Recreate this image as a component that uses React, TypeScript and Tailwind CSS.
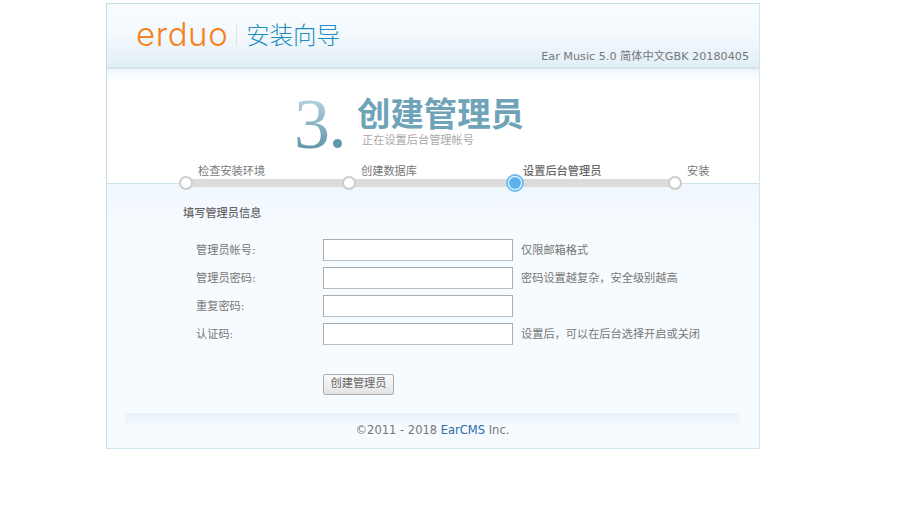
const cjk = "font-['DejaVu_Sans','Noto_Sans_CJK_SC',sans-serif]";

function Row({ label, hint }: { label: string; hint?: string }) {
  return (
    <div className="flex h-[28px] items-start">
      <label className="w-[127px] pt-[3px] text-[11.2px] leading-[18px] text-[#777]">{label}</label>
      <input className="h-[22px] w-[190px] border border-[#ababab] border-b-[#bbb] bg-white outline-none" />
      {hint && <span className="ml-[8px] pt-[3px] text-[11.2px] leading-[18px] text-[#777]">{hint}</span>}
    </div>
  );
}

function Step({ label, w, active, bold }: { label: string; w: string; active?: boolean; bold?: boolean }) {
  return (
    <div className={`${w} relative h-[34px]`}>
      <span className={`absolute top-[2px] whitespace-nowrap text-[11.2px] leading-[16px] ${bold ? "left-[9px] font-medium text-[#666]" : "left-[12px] text-[#777]"}`}>
        {label}
      </span>
      {active ? (
        <span className="absolute left-[-8px] top-[12px] flex h-[18px] w-[18px] items-center justify-center rounded-full border-2 border-[#6cbcee] bg-white">
          <span className="h-[12px] w-[12px] rounded-full bg-[#5cb2ec]" />
        </span>
      ) : (
        <span className="absolute left-[-7px] top-[14px] h-[14px] w-[14px] rounded-full border-2 border-[#cccccc] bg-white" />
      )}
    </div>
  );
}

export default function App() {
  return (
    <div className={`h-[523px] w-[900px] bg-white pl-[106px] pt-[3px] ${cjk}`}>
      <div className="relative flex h-[446px] w-[654px] flex-col border border-[#c6dde8] border-r-[#d3e5ed] border-b-[#d3e5ed] bg-[#f7fbff]">
        <header className="flex h-[65px] shrink-0 items-start justify-between border-b-2 border-[#d5e3ec] bg-gradient-to-b from-[#f8fcff] via-[#f3f9fd] to-[#e2eff7]">
          <div className="flex items-center pl-[29px] pt-[16px]">
            <span className="-mt-px font-['Inter',sans-serif] text-[33px] font-light leading-[30px] tracking-[0.6px] text-[#f58220]">erduo</span>
            <span className="ml-[8px] h-[22px] w-px bg-[#dfe5e5]" />
            <span className="-mt-px ml-[9px] font-['Noto_Sans_CJK_SC',sans-serif] text-[23.4px] font-light leading-[30px] text-[#1c8dbb]">安装向导</span>
          </div>
          <span className="mr-[10px] mt-[45px] text-[11.2px] leading-[16px] text-[#777]">Ear Music 5.0 简体中文GBK 20180405</span>
        </header>

        <section className="relative h-[114px] shrink-0 bg-gradient-to-b from-[#eef6fb] to-white to-[12px] pt-[20px]">
          <div className="flex pl-[186px]">
            <span className="bg-gradient-to-b from-[#c5dfe9] to-[#5089a1] bg-clip-text pl-[1px] font-['Liberation_Serif',serif] text-[72px] leading-[70px] text-transparent">3</span>
            <span className="mt-[50px] ml-[3px] h-[9px] w-[9px] self-start rounded-full bg-[#5f97ad]" />
            <div className="ml-[15px] flex flex-col">
              <h1 className="mt-[6px] font-['Noto_Sans_CJK_SC',sans-serif] text-[33.4px] font-bold leading-[34px] text-[#6ea3b8]">创建管理员</h1>
              <p className="ml-[5px] mt-[4px] text-[11.2px] leading-[16px] text-[#aaaaaa]">正在设置后台管理帐号</p>
            </div>
          </div>
        </section>

        <main className="relative flex-1 border-t border-[#cfe3ec] bg-gradient-to-b from-[#f1f8fd] to-[#f6fbff] to-[60px]">
          <div className="absolute left-[79px] top-[-22px] flex">
            <div className="absolute left-[0px] top-[17px] h-[8px] w-[489px] bg-[#dcdcdc]" />
            <Step label="检查安装环境" w="w-[163px]" />
            <Step label="创建数据库" w="w-[165px]" />
            <Step label="设置后台管理员" w="w-[161px]" active bold />
            <Step label="安装" w="w-[40px]" />
          </div>

          <h2 className="pl-[76px] pt-[22px] text-[11.2px] font-medium leading-[16px] text-[#666]">填写管理员信息</h2>

          <form className="pl-[89px] pt-[17px]">
            <Row label="管理员帐号:" hint="仅限邮箱格式" />
            <Row label="管理员密码:" hint="密码设置越复杂，安全级别越高" />
            <Row label="重复密码:" />
            <Row label="认证码:" hint="设置后，可以在后台选择开启或关闭" />
            <div className="pl-[127px] pt-[19px]">
              <button type="button" className="h-[21px] w-[71px] rounded-[2px] border border-[#aaaaaa] bg-gradient-to-b from-[#fafafa] to-[#e4e4e4] text-[11.2px] leading-[18px] text-[#666]">
                创建管理员
              </button>
            </div>
          </form>

          <footer className="ml-[18px] mr-[19px] mt-[18px] h-[11px] bg-gradient-to-b from-[#e8f2fa] to-[#f2f8fd]" />
          <p className="-mt-px pr-px text-center text-[11.5px] leading-[14px] text-[#777]">
            ©2011 - 2018 <span className="text-[#2a6ca6]">EarCMS</span> Inc.
          </p>
        </main>
      </div>
    </div>
  );
}
